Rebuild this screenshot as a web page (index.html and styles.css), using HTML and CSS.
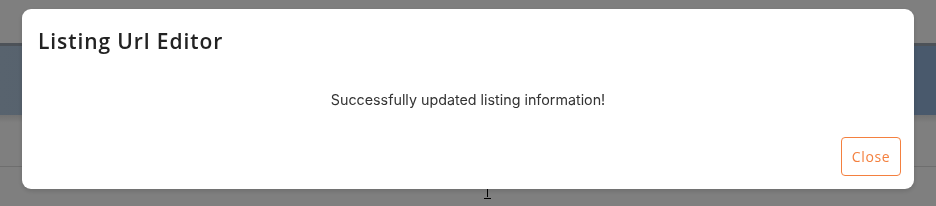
FILE: index.html
```html
<!DOCTYPE html>
<html lang="en">
<head>
    <meta charset="UTF-8">
    <meta name="viewport" content="width=device-width, initial-scale=1.0">
    <title>Listing Url Editor</title>
    <link rel="stylesheet" href="styles.css">
</head>
<body>
    <div class="page">
        <div class="page-top"></div>
        <div class="page-band"></div>
        <div class="page-sub"></div>
        <div class="page-rest">
            <span class="caret"></span>
        </div>
    </div>
    <div class="overlay">
        <div class="modal">
            <div class="modal-header">
                <h2>Listing Url Editor</h2>
            </div>
            <div class="modal-body">
                <p>Successfully updated listing information!</p>
            </div>
            <div class="modal-footer">
                <button class="btn-close" type="button">Close</button>
            </div>
        </div>
    </div>
</body>
</html>
```

FILE: styles.css
```css
html, body { margin: 0; height: 100%; }
body { background-color: #ffffff; font-family: "Open Sans", Arial, sans-serif; overflow: hidden; }
.page { height: 100%; display: flex; flex-direction: column; }
.page-top { height: 43px; background-color: #ffffff; }
.page-band { height: 72px; background: linear-gradient(to right, #b0c6dc, #92b2d8); border-top: 3px solid #9aa4b0; box-sizing: border-box; }
.page-sub { height: 51px; background: linear-gradient(to bottom, #e4e4e4, #ffffff 8px); border-bottom: 1px solid #dcdcdc; }
.page-rest { flex: 1; position: relative; }
.caret { position: absolute; left: 484px; top: 21px; width: 7px; height: 10px; border-bottom: 1px solid #000; }
.caret::before { content: ""; position: absolute; left: 3px; top: 0; width: 1px; height: 9px; background-color: #000; }
.overlay { position: fixed; inset: 0; background-color: rgba(0, 0, 0, 0.5); padding: 9px 22px; box-sizing: border-box; }
.modal { background-color: #fff; border-radius: 9px; height: 180px; display: flex; flex-direction: column; box-shadow: 0 2px 5px rgba(0, 0, 0, 0.15); }
.modal-header { padding: 18px 16px 0; }
.modal-header h2 { margin: 0; font-size: 21px; font-weight: 600; color: #222; line-height: 28px; letter-spacing: 0.9px; }
.modal-body { flex: 1; display: flex; justify-content: center; padding-top: 36px; }
.modal-body p { margin: 0; font-family: Inter, "Liberation Sans", Arial, sans-serif; font-size: 14.3px; color: #333; line-height: 18px; }
.modal-footer { display: flex; justify-content: flex-end; padding: 0 13px 13px; }
.btn-close { width: 60px; height: 39px; background: #fff; border: 1px solid #f4803f; border-radius: 4px; color: #f4803f; font-family: "Open Sans", Arial, sans-serif; font-size: 14px; letter-spacing: 0.6px; cursor: pointer; }
```
